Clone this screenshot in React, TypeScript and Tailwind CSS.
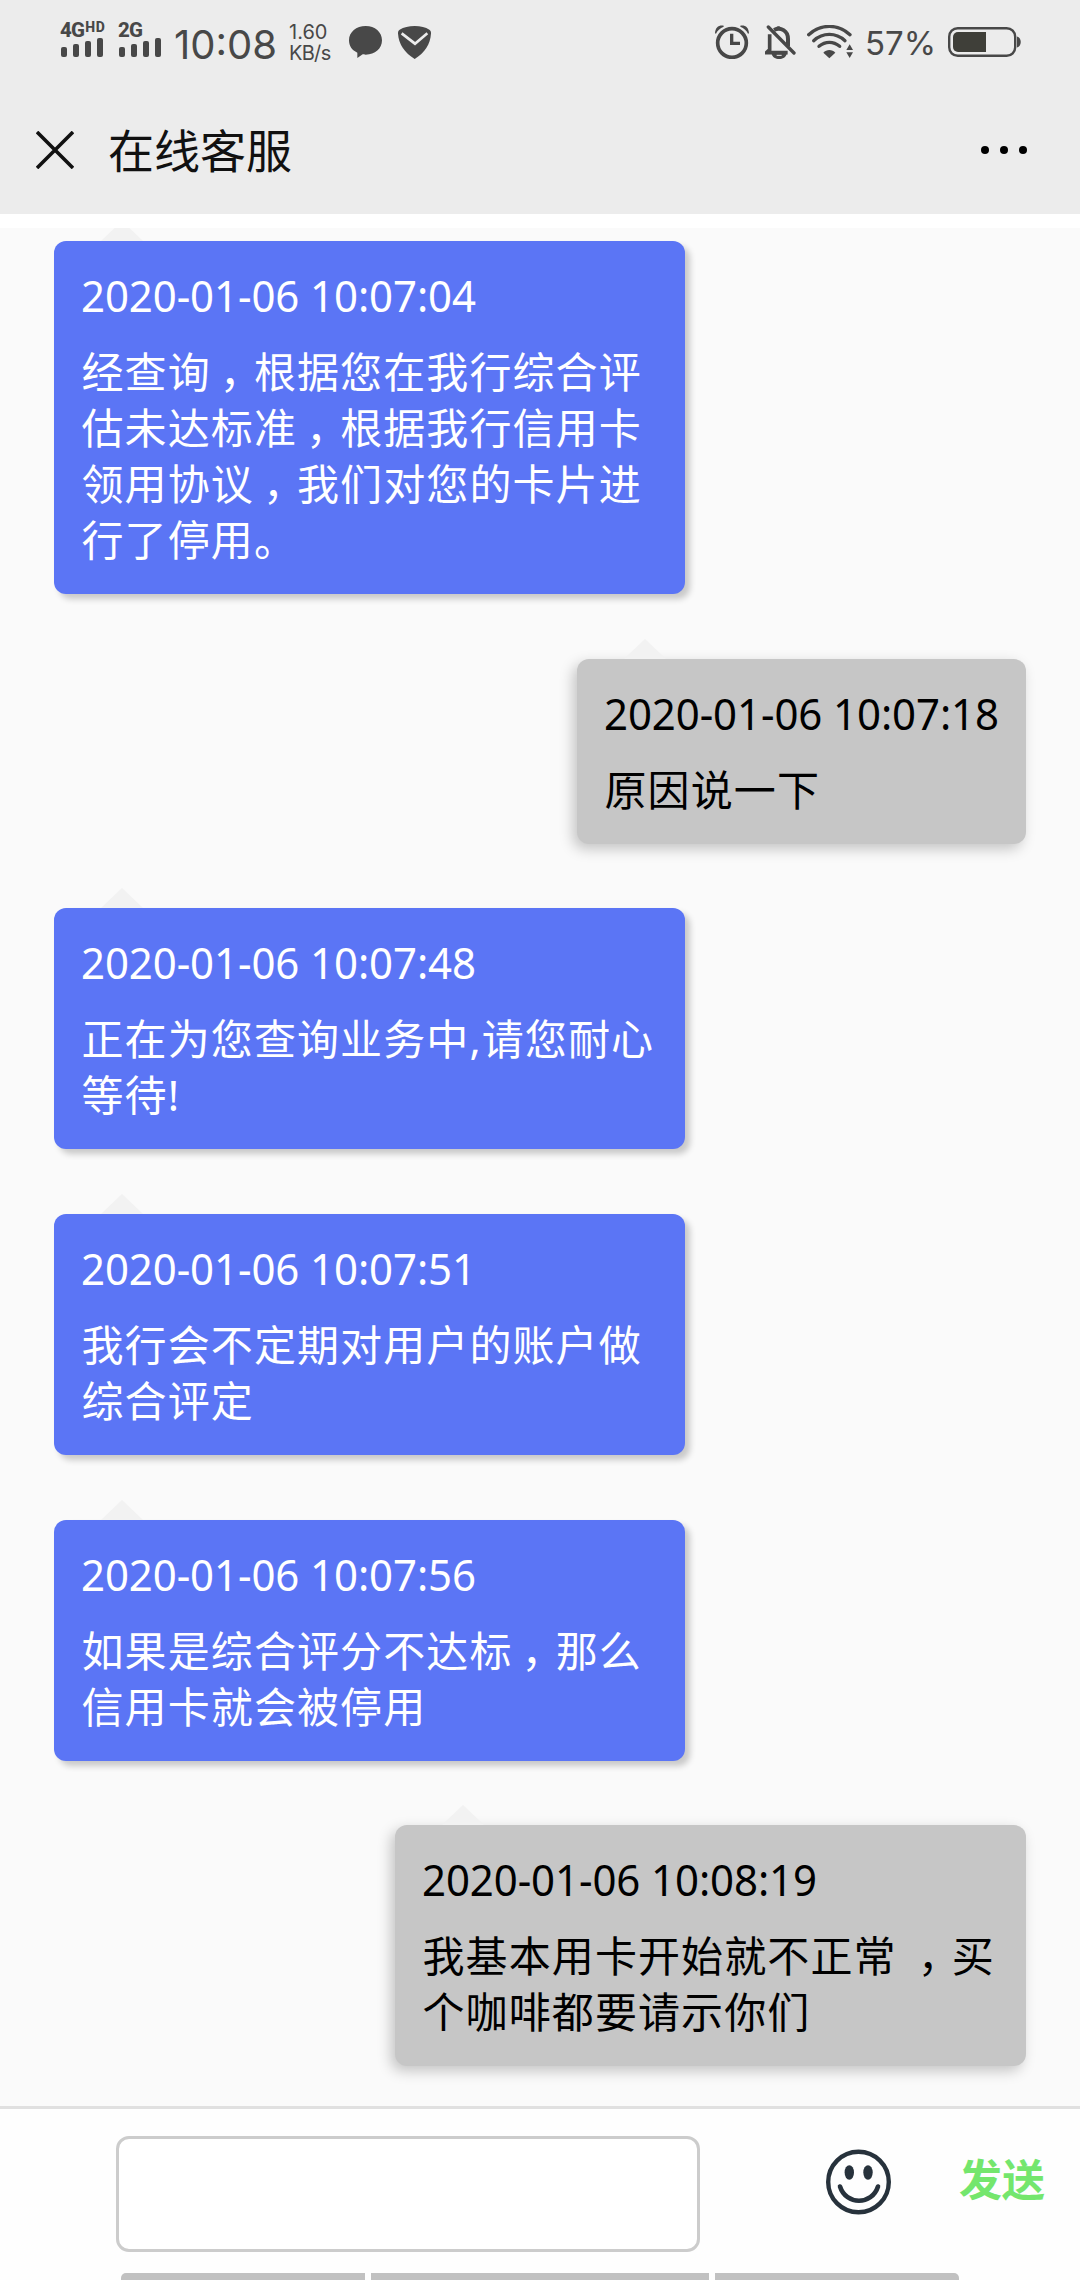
import clsx from "clsx";

type Message = {
  from: "agent" | "user";
  time: string;
  lines: string[];
};

const messages: Message[] = [
  {
    from: "agent",
    time: "2020-01-06 10:07:04",
    lines: [
      "经查询，根据您在我行综合评",
      "估未达标准，根据我行信用卡",
      "领用协议，我们对您的卡片进",
      "行了停用。",
    ],
  },
  { from: "user", time: "2020-01-06 10:07:18", lines: ["原因说一下"] },
  {
    from: "agent",
    time: "2020-01-06 10:07:48",
    lines: ["正在为您查询业务中,请您耐心", "等待!"],
  },
  {
    from: "agent",
    time: "2020-01-06 10:07:51",
    lines: ["我行会不定期对用户的账户做", "综合评定"],
  },
  {
    from: "agent",
    time: "2020-01-06 10:07:56",
    lines: ["如果是综合评分不达标，那么", "信用卡就会被停用"],
  },
  {
    from: "user",
    time: "2020-01-06 10:08:19",
    lines: ["我基本用卡开始就不正常 ，买", "个咖啡都要请示你们"],
  },
];

const Signal = ({ label, suffix }: { label: string; suffix?: string }) => (
  <div className="flex w-[46px] flex-col">
    <div className="flex h-[16px] items-start font-['Roboto',sans-serif] text-[20.5px] leading-[16px] font-extrabold tracking-[-0.8px]">
      {label}
      {suffix && (
        <span className="ml-px text-[14px] leading-[10px] tracking-[0.6px]">
          {suffix}
        </span>
      )}
    </div>
    <div className="ml-px flex h-[19px] items-end gap-[6px]">
      <div className="h-[10px] w-[6px] rounded-[2px] bg-current" />
      <div className="h-[13px] w-[6px] rounded-[2px] bg-current" />
      <div className="h-[16px] w-[6px] rounded-[2px] bg-current" />
      <div className="h-[19px] w-[6px] rounded-[2px] bg-current" />
    </div>
  </div>
);

const StatusBar = () => (
  <div className="flex h-[86px] items-start pr-[59px] pl-[60px] text-[#484848]">
    <div className="mt-[22px] flex gap-[12px]">
      <Signal label="4G" suffix="HD" />
      <Signal label="2G" />
    </div>
    <div className="mt-[24px] ml-[10px] w-[115px] font-['Inter',sans-serif] text-[40px] leading-[41px] font-normal whitespace-nowrap">
      10:08
    </div>
    <div className="mt-[22px] w-[60px] font-['Inter',sans-serif] text-[20px] leading-[21px]">
      <div>1.60</div>
      <div className="tracking-[-0.7px]">KB/s</div>
    </div>

    <svg className="mt-[26px]" width="34" height="33" viewBox="0 0 102 99">
      <path
        fill="currentColor"
        d="M50 0c28 0 49 18 49 43S78 86 50 86c-4 0-6 0-9-1L25 96V80C9 73 0 60 0 43 0 18 22 0 50 0z"
      />
    </svg>
    <svg className="mt-[26px] ml-[15px]" width="33" height="33" viewBox="0 0 99 99">
      <path
        fill="currentColor"
        d="M50 0c18 0 33 4 44 11 4 3 5 6 5 11-2 35-19 58-49 77C20 80 2 57 0 22c0-5 1-8 5-11C17 4 32 0 50 0z"
      />
      <path d="M11 22l40 31 37-31" fill="none" stroke="#ececec" strokeWidth="8" />
    </svg>

    <div className="ml-auto flex items-start">
      {/* alarm */}
      <svg className="mt-[25px]" width="34" height="34" viewBox="0 0 102 102">
        <g fill="none" stroke="currentColor">
          <circle cx="51" cy="54" r="43" strokeWidth="11" />
          <path d="M50 26v29h25" strokeWidth="10" />
        </g>
        <path
          fill="currentColor"
          d="M0 25C1 8 10 0 26 2l0 3C15 9 7 17 3 26zM102 25C101 8 92 0 76 2l0 3c11 4 19 12 23 21z"
        />
      </svg>
      {/* muted bell */}
      <svg className="mt-[25px] ml-[16px]" width="31" height="34" viewBox="0 0 93 102">
        <path d="M14 28v46L4 83h64" fill="none" stroke="currentColor" strokeWidth="11" />
        <path
          d="M27 15c20-10 42 2 42 27v22"
          fill="none"
          stroke="currentColor"
          strokeWidth="12"
        />
        <path fill="currentColor" d="M33 8c2-6 13-6 15 0zM20 86h45c-3 21-42 21-45 0z" />
        <path d="M35 91h15" stroke="#ececec" strokeWidth="3" />
        <path d="M10 6l77 78" stroke="currentColor" strokeWidth="10" strokeLinecap="round" />
      </svg>
      {/* wifi */}
      <svg className="mt-[25px] ml-[11px]" width="46" height="34" viewBox="0 0 138 102">
        <g fill="none" stroke="currentColor" strokeWidth="10" strokeLinecap="round">
          <path d="M5 29C41-4 93-4 129 29" />
          <path d="M20 47c28-25 66-25 94 0" />
          <path d="M36 64c19-16 43-16 62 0" />
        </g>
        <path fill="currentColor" d="M49 83c9-11 27-11 36 0L67 100z" />
        <path fill="currentColor" d="M118 75l10-17 10 17zM118 82h20l-10 17z" />
      </svg>
      <div className="mt-[25px] ml-[12px] w-[83px] font-['Inter',sans-serif] text-[33px] leading-[36px] font-normal whitespace-nowrap">
        57%
      </div>
      {/* battery */}
      <svg className="mt-[27px]" width="73" height="30" viewBox="0 0 73 30">
        <rect x="1.2" y="1.2" width="66" height="27.6" rx="8.5" fill="none" stroke="currentColor" strokeWidth="2.4" />
        <path d="M38 5H10a5 5 0 0 0-5 5v10a5 5 0 0 0 5 5h28z" fill="#3f3f39" />
        <path d="M69 9.5c5 1 5 10 0 11z" fill="currentColor" />
      </svg>
    </div>
  </div>
);

const TitleBar = () => (
  <div className="flex h-[128px] items-center pr-[53px] pl-[36px] text-[#111]">
    <svg width="38" height="38" viewBox="0 0 38 38" stroke="currentColor" strokeWidth="3.6">
      <path d="M1 1l36 36M37 1L1 37" />
    </svg>
    <h1 className="ml-[34px] text-[46px] leading-[56px] font-normal">
      在线客服
    </h1>
    <div className="ml-auto flex gap-[11px]">
      <div className="size-[8px] rounded-full bg-black" />
      <div className="size-[8px] rounded-full bg-black" />
      <div className="size-[8px] rounded-full bg-black" />
    </div>
  </div>
);

// full-width commas sit in the middle of their cell
const Line = ({ text }: { text: string }) => (
  <p className="whitespace-pre">
    {text.split("，").map((part, i) => (
      <span key={i}>
        {i > 0 && (
          <span className="mr-[12px] ml-[9px] [font-feature-settings:'halt']">
            ，
          </span>
        )}
        {part}
      </span>
    ))}
  </p>
);

const Bubble = ({ message }: { message: Message }) => {
  const isUser = message.from === "user";
  return (
    <div
      className={clsx(
        "relative rounded-[12px] px-[27px] pt-[27px] pb-[26px] text-[42px] leading-[56px]",
        isUser
          ? "self-end bg-[#c6c6c6] text-black shadow-[-4px_5px_14px_rgba(0,0,0,0.22)]"
          : "w-[631px] self-start bg-[#5b75f5] text-white shadow-[5px_5px_6px_rgba(0,0,0,0.2)]",
        isUser && (message.lines.length > 1 ? "w-[631px]" : "w-[449px]")
      )}
    >
      <svg
        className="absolute -top-[20px] left-[47px]"
        width="42"
        height="20"
        viewBox="0 0 42 20"
      >
        <path d="M21 0l21 20H0z" fill="#f2f2f2" />
      </svg>
      <p className="mb-[20px] origin-[0_44px] scale-y-[1.05] font-['Noto_Sans',sans-serif] tracking-[-0.1px] whitespace-nowrap">
        {message.time}
      </p>
      <div className="pl-[0.5px] tracking-[1.1px]">
        {message.lines.map((line) => (
          <Line key={line} text={line} />
        ))}
      </div>
    </div>
  );
};

const InputBar = () => (
  <div className="flex h-[174px] flex-col border-t-[3px] border-[#e0e0e0] bg-[#fefefe]">
    <div className="flex h-[164px] items-start pt-[27px] pl-[116px]">
      <input
        className="h-[116px] w-[584px] rounded-[13px] border-[3px] border-[#ccc] bg-white px-4"
        type="text"
      />
      <svg className="mt-[13px] ml-[126px]" width="65" height="66" viewBox="0 0 65 66">
        <circle cx="32.5" cy="33" r="30.3" fill="none" stroke="#27323c" strokeWidth="4.4" />
        <ellipse cx="23.3" cy="23.5" rx="4.7" ry="7.3" fill="#27323c" />
        <ellipse cx="42" cy="23.5" rx="4.7" ry="7.3" fill="#27323c" />
        <path
          d="M14 37.5c6 19 32 19 38 0"
          fill="none"
          stroke="#27323c"
          strokeWidth="4.6"
          strokeLinecap="round"
        />
      </svg>
      <button className="mt-[16px] ml-[68px] text-[43px] leading-[56px] font-bold text-[#74e66d]">
        发送
      </button>
    </div>
    <div className="flex h-[7px] gap-[6px] overflow-hidden pl-[121px]">
      <div className="h-[20px] w-[244px] rounded-l-[5px] bg-[#c1c1c1]" />
      <div className="h-[20px] w-[338px] bg-[#c1c1c1]" />
      <div className="h-[20px] w-[244px] rounded-r-[5px] bg-[#c1c1c1]" />
    </div>
  </div>
);

export default function App() {
  return (
    <div className="flex h-[2280px] w-[1080px] flex-col overflow-hidden bg-white font-['Noto_Sans','Noto_Sans_CJK_SC',sans-serif]">
      <header className="bg-[#ececec]">
        <StatusBar />
        <TitleBar />
      </header>
      <main className="mt-[14px] flex flex-1 flex-col gap-[64.7px] overflow-hidden bg-[#fafafa] pt-[13px] pr-[54px] pl-[54px]">
        {messages.map((message) => (
          <Bubble key={message.time} message={message} />
        ))}
      </main>
      <InputBar />
    </div>
  );
}
